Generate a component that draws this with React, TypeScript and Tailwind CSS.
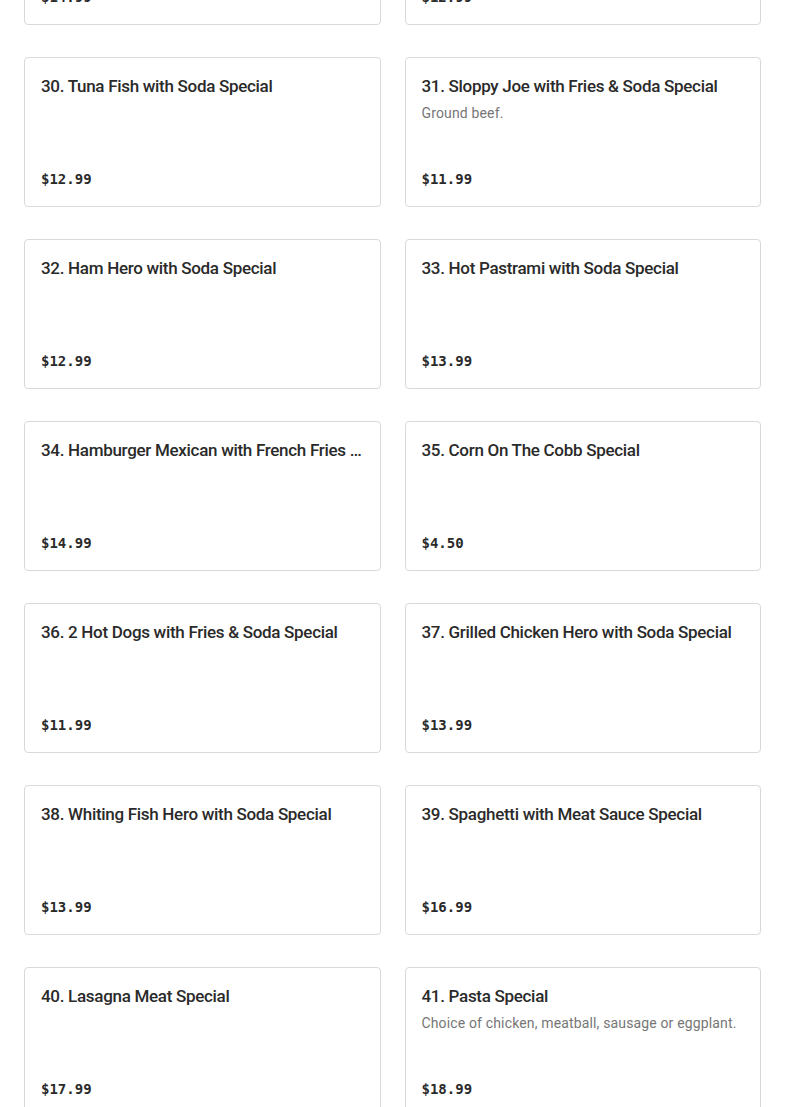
import React from "react";

type Item = { name: string; desc?: string; price: string };

const items: Item[] = [
  { name: "28. Placeholder", price: "$14.99" },
  { name: "29. Placeholder", price: "$12.99" },
  { name: "30. Tuna Fish with Soda Special", price: "$12.99" },
  { name: "31. Sloppy Joe with Fries & Soda Special", desc: "Ground beef.", price: "$11.99" },
  { name: "32. Ham Hero with Soda Special", price: "$12.99" },
  { name: "33. Hot Pastrami with Soda Special", price: "$13.99" },
  { name: "34. Hamburger Mexican with French Fries & Soda Special", price: "$14.99" },
  { name: "35. Corn On The Cobb Special", price: "$4.50" },
  { name: "36. 2 Hot Dogs with Fries & Soda Special", price: "$11.99" },
  { name: "37. Grilled Chicken Hero with Soda Special", price: "$13.99" },
  { name: "38. Whiting Fish Hero with Soda Special", price: "$13.99" },
  { name: "39. Spaghetti with Meat Sauce Special", price: "$16.99" },
  { name: "40. Lasagna Meat Special", price: "$17.99" },
  { name: "41. Pasta Special", desc: "Choice of chicken, meatball, sausage or eggplant.", price: "$18.99" },
];

export default function App() {
  return (
    <div className="h-[1107px] w-full overflow-hidden bg-white">
      <div className="mt-[-125px] grid grid-cols-2 gap-x-6 gap-y-8 px-6">
        {items.map((it, i) => (
          <div
            key={i}
            className="flex h-[150px] flex-col rounded-[4px] border border-[#d9d9d9] bg-white px-4 pt-4 pb-[17px]"
          >
            <div
              className="truncate text-[17px] leading-6 font-medium tracking-[-0.3px] text-[#2a2a2a]"
              style={{ fontFamily: "Roboto, 'Liberation Sans', sans-serif" }}
            >
              {it.name}
            </div>
            {it.desc && (
              <div
                className="mt-[5px] truncate text-[14px] leading-5 tracking-[0.15px] text-[#767676]"
                style={{ fontFamily: "Roboto, 'Liberation Sans', sans-serif" }}
              >
                {it.desc}
              </div>
            )}
            <div className="flex-1" />
            <div
              className="text-[14px] leading-5 font-bold text-[#2a2a2a]"
              style={{ fontFamily: "'DejaVu Sans Mono', 'Liberation Mono', monospace" }}
            >
              {it.price}
            </div>
          </div>
        ))}
      </div>
    </div>
  );
}
